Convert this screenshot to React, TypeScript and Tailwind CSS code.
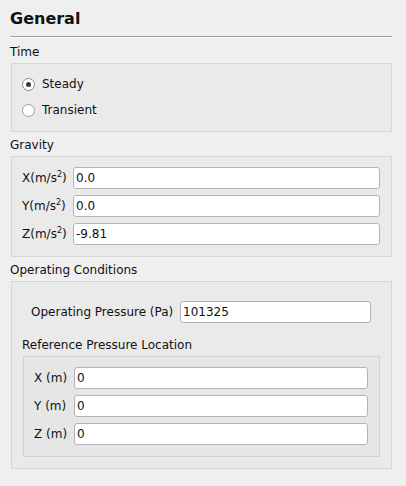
import React from "react";

function Field({ value, className = "" }: { value: string; className?: string }) {
  return (
    <input
      readOnly
      value={value}
      className={`h-[22px] border border-[#b4b4b4] rounded-[3px] bg-white pl-[2px] pr-[2px] text-[12px] leading-[14px] text-[#111] outline-none ${className}`}
    />
  );
}

function Radio({ checked, label }: { checked: boolean; label: string }) {
  return (
    <div className="h-[20px] flex items-center gap-[7px]">
      <div
        className={`w-[13px] h-[13px] rounded-full border bg-white flex items-center justify-center ${
          checked ? "border-[#8a8a8a]" : "border-[#9c9c9c]"
        }`}
      >
        {checked && <div className="w-[5px] h-[5px] rounded-full bg-[#3a3a3a]" />}
      </div>
      <span>{label}</span>
    </div>
  );
}

function GravityRow({ axis, value }: { axis: string; value: string }) {
  return (
    <div className="flex items-center h-[22px]">
      <div className="w-[51px] shrink-0">
        {axis}(m/s<sup className="text-[8px] top-[-5px]">2</sup>)
      </div>
      <Field value={value} className="flex-1 min-w-0" />
    </div>
  );
}

function RefRow({ axis }: { axis: string }) {
  return (
    <div className="flex items-center h-[22px]">
      <div className="w-[40px] shrink-0">{axis} (m)</div>
      <Field value="0" className="flex-1 min-w-0" />
    </div>
  );
}

export default function App() {
  return (
    <div className="w-[406px] h-[486px] bg-[#efefef] font-['DejaVu_Sans',sans-serif] text-[12px] leading-[14px] text-[#111] pl-[10px] pr-[14px] pt-[9px] flex flex-col">
      <div className="h-[19px] text-[16px] leading-[19px] font-bold">General</div>
      <div className="mt-[8px] h-px bg-[#a0a0a0]" />
      <div className="h-px bg-white" />

      <div className="mt-[7px] h-[14px]">Time</div>
      <div className="mt-[4px] ml-[1px] border border-[#d6d6d6] bg-[#eaeaea] pt-[10px] pb-[11px] pl-[10px] flex flex-col gap-[6px]">
        <Radio checked label="Steady" />
        <Radio checked={false} label="Transient" />
      </div>

      <div className="mt-[6px] h-[14px]">Gravity</div>
      <div className="mt-[4px] ml-[1px] border border-[#d6d6d6] bg-[#eaeaea] pt-[10px] pb-[11px] pl-[10px] pr-[11px] flex flex-col gap-[6px]">
        <GravityRow axis="X" value="0.0" />
        <GravityRow axis="Y" value="0.0" />
        <GravityRow axis="Z" value="-9.81" />
      </div>

      <div className="mt-[6px] h-[14px]">Operating Conditions</div>
      <div className="mt-[4px] ml-[1px] border border-[#d6d6d6] bg-[#eaeaea] pt-[19px] pb-[11px] flex flex-col">
        <div className="flex items-center h-[22px] pl-[19px]">
          <div className="w-[149px] shrink-0">Operating Pressure (Pa)</div>
          <Field value="101325" className="w-[191px]" />
        </div>
        <div className="mt-[15px] ml-[10px] h-[14px]">Reference Pressure Location</div>
        <div className="mt-[4px] mx-[11px] border border-[#d2d2d2] bg-[#e6e6e6] pt-[10px] pb-[11px] pl-[10px] pr-[11px] flex flex-col gap-[6px]">
          <RefRow axis="X" />
          <RefRow axis="Y" />
          <RefRow axis="Z" />
        </div>
      </div>
    </div>
  );
}
